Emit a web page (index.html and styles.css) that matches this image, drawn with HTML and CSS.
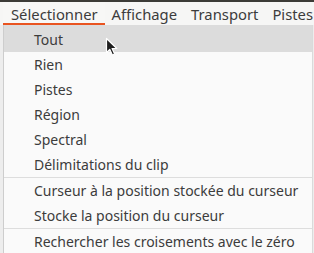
FILE: index.html
```html
<!DOCTYPE html>
<html lang="fr">
<head>
<meta charset="utf-8">
<title>Menu Sélectionner</title>
<link rel="stylesheet" href="styles.css">
</head>
<body>
<div class="screen">
  <div class="topline"></div>
  <nav class="menubar">
    <span class="mb-item active">Sélectionner</span>
    <span class="mb-item">Affichage</span>
    <span class="mb-item">Transport</span>
    <span class="mb-item">Pistes</span>
  </nav>
  <div class="dropdown">
    <div class="mi first hover">Tout</div>
    <div class="mi">Rien</div>
    <div class="mi">Pistes</div>
    <div class="mi">Région</div>
    <div class="mi">Spectral</div>
    <div class="mi">Délimitations du clip</div>
    <div class="sep"></div>
    <div class="mi">Curseur à la position stockée du curseur</div>
    <div class="mi">Stocke la position du curseur</div>
    <div class="sep"></div>
    <div class="mi">Rechercher les croisements avec le zéro</div>
  </div>
  <svg class="pointer" width="14" height="20" viewBox="0 0 14 20">
    <path d="M1.5 1.5 L1.5 15.5 L4.8 12.4 L7.4 18 L9.6 17 L7.1 11.5 L11.8 11.5 Z" fill="#1e1e1e" stroke="#ffffff" stroke-width="1.2" stroke-linejoin="round"/>
  </svg>
</div>
</body>
</html>
```

FILE: styles.css
```css
* { box-sizing: border-box; }
html, body {
  margin: 0;
  padding: 0;
  background: #f7f7f7;
}
body {
  width: 314px;
  height: 253px;
  overflow: hidden;
  font-family: "Noto Sans", "DejaVu Sans", sans-serif;
  font-size: 14px;
  color: #3c3c3c;
}
.screen {
  position: relative;
  width: 314px;
  height: 253px;
  overflow: hidden;
  background: #ededed;
}
.topline {
  height: 2px;
  background: #3c3b37;
}
.menubar {
  height: 23px;
  display: flex;
  align-items: stretch;
  background: #f6f6f5;
  padding-left: 3px;
  font-size: 14.8px;
}
.mb-item {
  display: flex;
  align-items: center;
  padding: 0 7px 0 7px;
  white-space: nowrap;
  height: 23px;
}
.mb-item.active {
  padding-left: 8px;
  background: #f7f7f6;
  box-shadow: inset 0 -2px 0 #e95420;
}
.dropdown {
  margin-left: 3px;
  width: 310px;
  height: 228px;
  background: #fafafa;
  border-left: 1px solid #cdcdcd;
  border-right: 1px solid #dadada;
}
.mi {
  height: 25px;
  display: flex;
  align-items: center;
  padding-left: 30px;
  white-space: nowrap;
}
.mi.first {
  height: 27px;
  padding-top: 2px;
}
.mi.hover {
  background: #dcdcdc;
}
.sep {
  height: 1px;
  background: #dddddd;
}
.pointer {
  position: absolute;
  left: 105px;
  top: 37px;
}
```
